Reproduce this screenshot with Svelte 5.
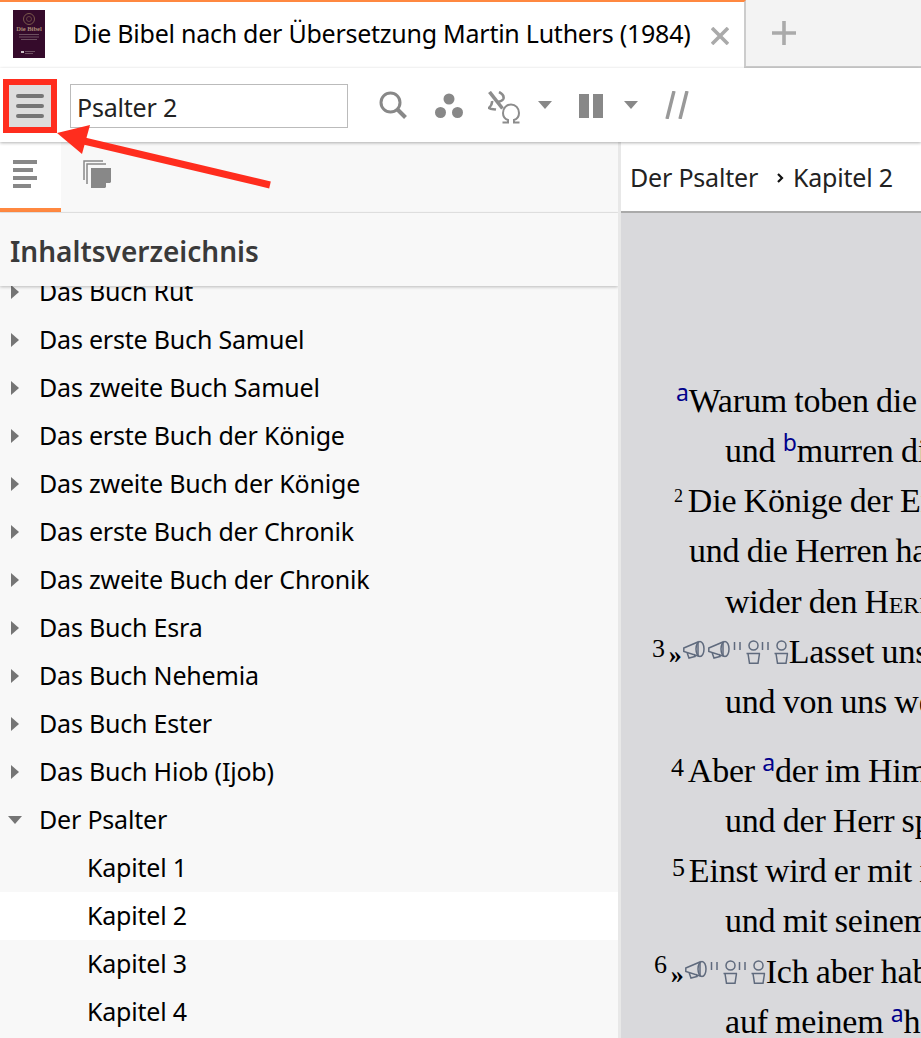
<script lang="ts">
  const books = [
    "Das Buch Rut",
    "Das erste Buch Samuel",
    "Das zweite Buch Samuel",
    "Das erste Buch der Könige",
    "Das zweite Buch der Könige",
    "Das erste Buch der Chronik",
    "Das zweite Buch der Chronik",
    "Das Buch Esra",
    "Das Buch Nehemia",
    "Das Buch Ester",
    "Das Buch Hiob (Ijob)"
  ];
  const chapters = ["Kapitel 1", "Kapitel 2", "Kapitel 3", "Kapitel 4"];

  // x = left edge of the line inside the reader, num = verse number, note = blue cross reference
  const verses = [
    { x: 55, note: "a", text: "Warum toben die Heiden" },
    { x: 104, pre: "und ", note: "b", text: "murren die Völker so vergeblich?" },
    { x: 53, num: "2", low: true, text: "Die Könige der Erde lehnen sich auf," },
    { x: 68, text: "und die Herren halten Rat miteinander" },
    { x: 104, text: "wider den ", caps: "Herrn" },
    { x: 31, num: "3", speech: 2, text: "Lasset uns zerreißen ihre Bande" },
    { x: 104, text: "und von uns werfen ihre Stricke!" },
    { x: 50, num: "4", gap: true, pre: "Aber ", note: "a", text: "der im Himmel wohnt, lachet ihrer," },
    { x: 104, text: "und der Herr spottet ihrer." },
    { x: 51, num: "5", text: "Einst wird er mit ihnen reden im Zorn," },
    { x: 104, text: "und mit seinem Grimm wird er sie schrecken:" },
    { x: 33, num: "6", high: true, speech: 1, text: "Ich aber habe meinen König eingesetzt" },
    { x: 104, pre: "auf meinem ", note: "a", text: "heiligen Berg Zion." }
  ];
</script>

{#snippet caret(cls)}
  <svg class={cls} width="14" height="8" viewBox="0 0 14 8"><path d="M0 0h14L7 8z" /></svg>
{/snippet}

{#snippet megaphone()}
  <svg class="mark horn" width="25" height="20" viewBox="0 0 25 20" fill="none" stroke="#5f6a7d" stroke-width="1.500">
    <path d="M.8 8 15 2v14L.8 11.500zM4 12.500l2 5.500 6-1.500-1-2.500" />
    <ellipse cx="17" cy="9" rx="4" ry="7.500" />
  </svg>
{/snippet}

{#snippet person()}
  <svg class="mark" width="28" height="24" viewBox="0 0 28 24" fill="none" stroke="#5f6a7d" stroke-width="1.500">
    <path d="M1.500 2v8M7 2v8" />
    <circle cx="20.500" cy="5.500" r="4.500" />
    <path d="M13.500 13.500h13.500M15 13.500l1.500 9.800h8.500l1.500-9.800" />
  </svg>
{/snippet}

<div class="app">
  <header class="tabbar">
    <div class="tab">
      <svg class="cover" width="32" height="48" viewBox="0 0 32 48">
        <rect width="32" height="48" fill="#350b2b" />
        <circle cx="16" cy="9" r="5.500" fill="none" stroke="#7a5a4c" stroke-width="1" />
        <circle cx="16" cy="9" r="2.500" fill="none" stroke="#7a5a4c" stroke-width="0.700" />
        <text x="16" y="21" text-anchor="middle" font-size="6.500" font-family="Liberation Serif, serif" font-weight="700" fill="#a98a76">Die Bibel</text>
        <rect x="6" y="24" width="20" height="1" fill="#6d5060" />
        <rect x="6" y="26.500" width="20" height="1" fill="#6d5060" />
        <rect x="8" y="29" width="16" height="1" fill="#6d5060" />
        <rect x="8" y="41" width="3" height="2" fill="#c9c0c4" />
        <rect x="12" y="41" width="10" height="1" fill="#6d5060" />
        <rect x="12" y="43" width="8" height="1" fill="#6d5060" />
      </svg>
      <span class="title">Die Bibel nach der Übersetzung Martin Luthers (1984)</span>
      <svg class="close" width="18" height="18" viewBox="0 0 18 18"><path d="M1 1l16 16M17 1 1 17" stroke="#aaa" stroke-width="3.600" /></svg>
    </div>
    <div class="newtab">
      <svg width="24" height="24" viewBox="0 0 24 24"><path d="M12 0v24M0 12h24" stroke="#aaa" stroke-width="3.600" /></svg>
    </div>
  </header>

  <nav class="toolbar">
    <button class="menu" aria-label="Menü">
      <svg width="28" height="24" viewBox="0 0 28 24"><path d="M2 2h24M2 12h24M2 22h24" stroke="#757575" stroke-width="4" stroke-linecap="round" /></svg>
    </button>
    <div class="ref">Psalter 2</div>
    <svg class="search" width="28" height="28" viewBox="0 0 28 28" fill="none" stroke="#888"><circle cx="11.500" cy="11.500" r="9.500" stroke-width="3" /><path d="M18.500 18.500 26.500 26.500" stroke-width="4" /></svg>
    <svg class="dots" width="30" height="26" viewBox="0 0 30 26" fill="#888"><circle cx="15" cy="6" r="5.500" /><circle cx="6.500" cy="19.500" r="5.500" /><circle cx="23.500" cy="19.500" r="5.500" /></svg>
    <svg class="alpha" width="33" height="33" viewBox="0 0 33 33" fill="none" stroke="#8c8c8c">
      <path d="M1.500 1 14.500 17.500" stroke-width="3.600" />
      <path d="M11 1c3 1.500 5 4 4.500 6.500-.5 2-3 3-6 3.500M4 10c.5 3-1 5-3 7 2 1.500 4 1 7 1.500" stroke-width="2.600" />
      <path d="M14.500 31.500h5.500v-2.500c-3-1-5-3.500-5-7 0-5 3.500-8.500 8-8.500s8 3.500 8 8.500c0 3.500-2 6-5 7v2.500h5.500" stroke-width="2" />
    </svg>
    {@render caret("caret first")}
    <svg class="pause" width="24" height="24" viewBox="0 0 24 24" fill="#888"><rect width="10" height="24" /><rect x="14" width="10" height="24" /></svg>
    {@render caret("caret")}
    <svg class="slashes" width="24" height="28" viewBox="0 0 24 28" stroke="#999" stroke-width="3.400"><path d="M9 0 2 28M22 0 15 28" /></svg>
  </nav>

  <main class="panes">
    <aside class="side">
      <div class="sidetabs">
        <div class="sidetab active">
          <svg width="24" height="28" viewBox="0 0 24 28" fill="#888"><rect width="24" height="4" /><rect y="8" width="20" height="4" /><rect y="16" width="24" height="4" /><rect y="24" width="18" height="4" /></svg>
        </div>
        <div class="sidetab">
          <svg width="28" height="28" viewBox="0 0 28 28" fill="none" stroke="#888" stroke-width="1.500">
            <path d="M1 20V1h19M4 24V4h19" />
            <path d="M8 8h20v14l-6 6H8z" fill="#888" stroke="none" />
            <path d="M23 28v-5h5z" fill="#f8f8f8" stroke="none" />
          </svg>
        </div>
      </div>
      <h2>Inhaltsverzeichnis</h2>
      <ul class="tree">
        {#each books as b}
          <li><svg class="tri" width="8" height="14" viewBox="0 0 8 14"><path d="M0 0l8 7-8 7z" /></svg>{b}</li>
        {/each}
        <li><svg class="tri open" width="14" height="8" viewBox="0 0 14 8"><path d="M0 0h14L7 8z" /></svg>Der Psalter</li>
        {#each chapters as c, i}
          <li class="chapter" class:current={i === 1}>{c}</li>
        {/each}
      </ul>
    </aside>

    <section class="reader">
      <div class="crumbs">
        <span>Der Psalter</span>
        <svg width="8" height="10" viewBox="0 0 8 10" fill="none" stroke="#111" stroke-width="2.200"><path d="M2 1l4 4-4 4" /></svg>
        <span>Kapitel 2</span>
      </div>
      <div class="text">
        {#each verses as v}
          <p class:gap={v.gap} style="padding-left: {v.x}px">{#if v.num}<span class="num" class:low={v.low} class:high={v.high}>{v.num}</span>{/if}{#if v.speech}<span class="quote">»</span>{#each { length: v.speech } as _}{@render megaphone()}{/each}{@render person()}{@render person()}{/if}{#if v.pre}{v.pre}{/if}{#if v.note}<sup>{v.note}</sup>{/if}{v.text}{#if v.caps}<span class="caps">{v.caps}</span>{/if}</p>
        {/each}
      </div>
    </section>
  </main>

  <!-- annotation drawn on top of the screenshot -->
  <div class="hilite"></div>
  <svg class="arrow" width="280" height="70" viewBox="0 0 280 70">
    <path d="M270 60 84 16" stroke="#ff2d1e" stroke-width="7" />
    <path d="M57 8 90 0 82 29z" fill="#ff2d1e" />
  </svg>
</div>

<style>
  :global(body) {
    margin: 0;
    background: #fff;
  }

  .app {
    position: relative;
    width: 921px;
    height: 1038px;
    overflow: hidden;
    font-family: "Noto Sans", sans-serif;
    color: #000;
  }

  .tabbar {
    display: flex;
    height: 68px;
  }

  .tab {
    box-sizing: border-box;
    width: 746px;
    border-top: 2px solid #ff8840;
    border-right: 2px solid #ccc;
    display: flex;
    align-items: center;
    padding-left: 13px;
  }

  .cover { flex: none; margin-top: -2px; }

  .title {
    margin-left: 28px;
    font-size: 25px;
    letter-spacing: -0.25px;
    white-space: nowrap;
    margin-top: -4px;
  }

  .close { margin-left: 21px; margin-top: 2px; }

  .newtab {
    flex: 1;
    box-sizing: border-box;
    background: #f3f3f3;
    border-bottom: 2px solid #ccc;
    display: flex;
    align-items: center;
    padding-left: 26px;
  }

  .toolbar {
    position: relative;
    z-index: 3;
    height: 74px;
    display: flex;
    align-items: center;
    background: #fff;
    box-shadow: 0 1px 3px rgba(0, 0, 0, 0.3);
  }

  .menu {
    margin: 2px 0 0 9px;
    width: 42px;
    height: 42px;
    padding: 0 1px 0 0;
    border: 0;
    background: #ddd;
    display: flex;
    align-items: center;
    justify-content: center;
  }

  .ref {
    box-sizing: border-box;
    margin: 2px 0 0 19px;
    width: 278px;
    height: 44px;
    border: 1px solid #bbb;
    padding-left: 6px;
    font-size: 25px;
    letter-spacing: -0.2px;
    line-height: 44px;
    color: #222;
  }

  .search { margin-left: 31px; }
  .dots { margin-left: 27px; margin-top: 2px; }
  .alpha { margin-left: 24px; margin-top: 4px; }
  .caret { fill: #888; margin-left: 21px; }
  .caret.first { margin-left: 17px; }
  .pause { margin-left: 27px; margin-top: 2px; }
  .slashes { margin-left: 27px; }

  .panes {
    display: flex;
    height: 896px;
  }

  .side {
    box-sizing: border-box;
    width: 621px;
    flex: none;
    background: #f8f8f8;
    border-right: 3px solid #e8e8e8;
    display: flex;
    flex-direction: column;
    overflow: hidden;
  }

  .sidetabs {
    flex: none;
    display: flex;
    height: 70px;
    border-bottom: 1px solid #e8e8e8;
  }

  .sidetab {
    box-sizing: border-box;
    width: 61px;
    padding: 18px 0 0 22px;
  }

  .sidetab.active {
    padding-left: 13px;
    background: #fff;
    border-bottom: 4px solid #ff8840;
  }

  h2 {
    position: relative;
    z-index: 2;
    flex: none;
    margin: 0;
    height: 73px;
    padding-left: 10px;
    background: #f8f8f8;
    box-shadow: 0 1px 3px rgba(0, 0, 0, 0.25);
    font-size: 28px;
    font-weight: 600;
    line-height: 76px;
    color: #3a3a3a;
  }

  .tree {
    list-style: none;
    margin: -18px 0 0;
    padding: 0;
  }

  .tree li {
    position: relative;
    height: 48px;
    padding-left: 39px;
    font-size: 25px;
    letter-spacing: -0.2px;
    line-height: 47px;
    white-space: nowrap;
  }

  .tree li.chapter { padding-left: 87px; }
  .tree li.current { background: #fff; }

  .tri {
    position: absolute;
    left: 11px;
    top: 17px;
    fill: #757575;
  }

  .tri.open { left: 8px; top: 20px; }

  .reader {
    flex: 1;
    min-width: 0;
    display: flex;
    flex-direction: column;
    background: #d9d9dc;
  }

  .crumbs {
    flex: none;
    box-sizing: border-box;
    height: 71px;
    background: #fff;
    border-bottom: 2px solid #aaa;
    display: flex;
    align-items: center;
    padding-left: 9px;
    font-size: 25px;
    letter-spacing: -0.2px;
    color: #222;
    white-space: nowrap;
  }

  .crumbs svg { margin: 2px 9px 0 18px; }

  .text {
    padding-top: 162.5px;
    overflow: hidden;
    font-family: "Liberation Serif", serif;
    font-size: 34px;
    word-spacing: -1px;
    white-space: nowrap;
  }

  p {
    margin: 0;
    height: 50.3px;
    line-height: 50px;
    letter-spacing: -0.2px;
  }

  p.gap { margin-top: 18px; }

  .num {
    font-size: 26px;
    vertical-align: 6px;
    line-height: 0;
    margin-right: 4px;
  }

  .num.low { font-size: 18px; vertical-align: 10px; margin-right: 5px; }
  .num.high { vertical-align: 10px; }

  sup {
    font-family: "Noto Sans", sans-serif;
    font-size: 23px;
    color: #00008b;
    vertical-align: 11px;
    line-height: 0;
  }

  .quote { font-weight: 700; font-size: 26px; margin-right: 1px; }

  .mark { vertical-align: -1px; }
  .mark.horn { vertical-align: 3px; }

  .caps { font-variant: small-caps; }

  .hilite {
    position: absolute;
    left: 3px;
    top: 79px;
    width: 54px;
    height: 54px;
    box-sizing: border-box;
    border: 6px solid #ff2d1e;
    z-index: 5;
  }

  .arrow {
    position: absolute;
    left: 0;
    top: 125px;
    z-index: 5;
  }
</style>
